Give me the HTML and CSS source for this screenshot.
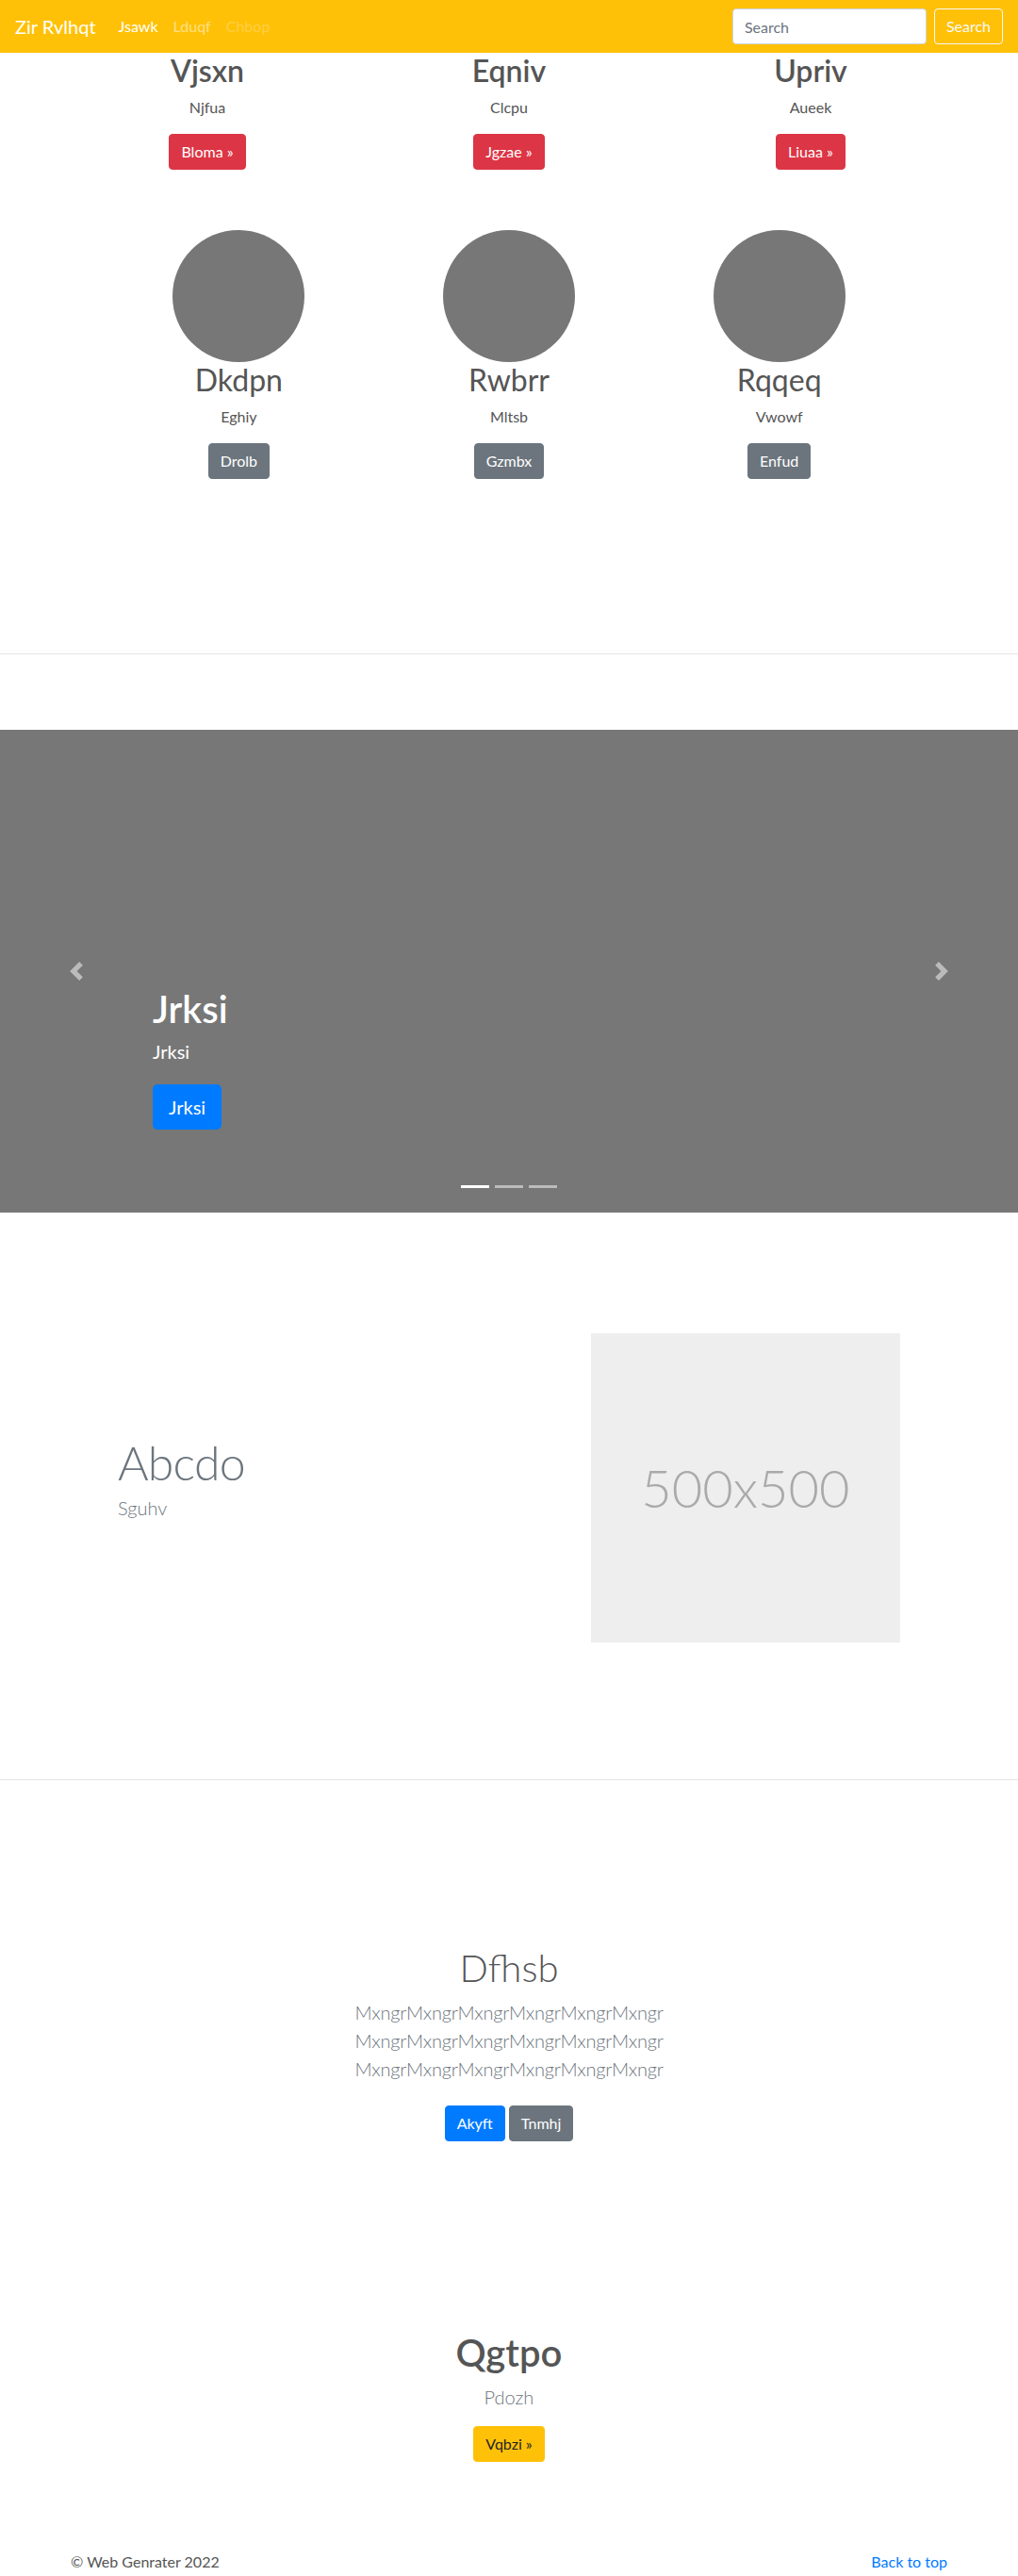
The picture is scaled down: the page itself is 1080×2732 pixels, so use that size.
FILE: index.html
```html
<!DOCTYPE html>
<html lang="en">
<head>
<meta charset="utf-8">
<title>Zir Rvlhqt</title>
<link rel="stylesheet" href="styles.css">
</head>
<body>
<nav class="navbar">
  <a class="brand" href="#">Zir Rvlhqt</a>
  <ul class="nav">
    <li><a class="nav-link active" href="#">Jsawk</a></li>
    <li><a class="nav-link" href="#">Lduqf</a></li>
    <li><a class="nav-link disabled" href="#">Chbop</a></li>
  </ul>
  <form class="search">
    <input class="search-input" type="text" placeholder="Search">
    <button class="btn btn-outline-light" type="button">Search</button>
  </form>
</nav>

<section class="features">
  <div class="feature">
    <h2 class="feature-title">Vjsxn</h2>
    <p class="feature-text">Njfua</p>
    <p class="feature-action"><a class="btn btn-danger" href="#">Bloma &raquo;</a></p>
  </div>
  <div class="feature">
    <h2 class="feature-title">Eqniv</h2>
    <p class="feature-text">Clcpu</p>
    <p class="feature-action"><a class="btn btn-danger" href="#">Jgzae &raquo;</a></p>
  </div>
  <div class="feature">
    <h2 class="feature-title">Upriv</h2>
    <p class="feature-text">Aueek</p>
    <p class="feature-action"><a class="btn btn-danger" href="#">Liuaa &raquo;</a></p>
  </div>
</section>

<section class="team">
  <div class="member">
    <div class="avatar"></div>
    <h2 class="member-name">Dkdpn</h2>
    <p class="feature-text">Eghiy</p>
    <p class="feature-action"><a class="btn btn-secondary" href="#">Drolb</a></p>
  </div>
  <div class="member">
    <div class="avatar"></div>
    <h2 class="member-name">Rwbrr</h2>
    <p class="feature-text">Mltsb</p>
    <p class="feature-action"><a class="btn btn-secondary" href="#">Gzmbx</a></p>
  </div>
  <div class="member">
    <div class="avatar"></div>
    <h2 class="member-name">Rqqeq</h2>
    <p class="feature-text">Vwowf</p>
    <p class="feature-action"><a class="btn btn-secondary" href="#">Enfud</a></p>
  </div>
</section>

<hr class="divider divider-top">

<section class="carousel">
  <div class="caption">
    <h1 class="caption-title">Jrksi</h1>
    <p class="caption-text">Jrksi</p>
    <a class="btn btn-lg btn-primary caption-btn" href="#">Jrksi</a>
  </div>
  <a class="ctrl ctrl-prev" href="#" aria-label="Previous">
    <svg class="ctrl-icon" viewBox="0 0 8 8" width="20" height="20"><path d="M5.25 0l-4 4 4 4 1.5-1.5L4.25 4l2.5-2.5L5.25 0z"/></svg>
  </a>
  <a class="ctrl ctrl-next" href="#" aria-label="Next">
    <svg class="ctrl-icon" viewBox="0 0 8 8" width="20" height="20"><path d="M2.75 0l-1.5 1.5L3.75 4l-2.5 2.5L2.75 8l4-4-4-4z"/></svg>
  </a>
  <ol class="indicators">
    <li class="indicator active"></li>
    <li class="indicator"></li>
    <li class="indicator"></li>
  </ol>
</section>

<section class="featurette">
  <div class="featurette-text">
    <h2 class="featurette-heading">Abcdo</h2>
    <p class="lead muted">Sguhv</p>
  </div>
  <div class="featurette-media">
    <div class="placeholder">500x500</div>
  </div>
</section>

<hr class="divider divider-mid">

<section class="jumbotron">
  <div class="jumbotron-inner">
    <h1 class="jumbotron-heading">Dfhsb</h1>
    <p class="lead muted jumbotron-lead">MxngrMxngrMxngrMxngrMxngrMxngr MxngrMxngrMxngrMxngrMxngrMxngr MxngrMxngrMxngrMxngrMxngrMxngr</p>
    <p class="actions">
      <a class="btn btn-primary" href="#">Akyft</a>
      <a class="btn btn-secondary" href="#">Tnmhj</a>
    </p>
  </div>
</section>

<section class="cta">
  <h1 class="cta-heading">Qgtpo</h1>
  <p class="lead muted cta-lead">Pdozh</p>
  <p><a class="btn btn-warning" href="#">Vqbzi &raquo;</a></p>
</section>

<footer class="footer">
  <p>&copy; Web Genrater 2022</p>
  <p><a class="back-top" href="#">Back to top</a></p>
</footer>
</body>
</html>
```

FILE: styles.css
```css
* {
  box-sizing: border-box;
}

body {
  margin: 0;
  font-family: Lato, "Open Sans", sans-serif;
  font-size: 16px;
  line-height: 1.5;
  color: #555;
  background: #fff;
}

a {
  text-decoration: none;
}

p,
h1,
h2 {
  margin: 0;
}

/* Buttons */
.btn {
  display: inline-block;
  padding: 6px 12px;
  font-size: 16px;
  line-height: 24px;
  font-family: inherit;
  font-weight: 400;
  border: 1px solid transparent;
  border-radius: 4px;
  text-align: center;
  white-space: nowrap;
}

.btn-lg {
  padding: 8px 16px;
  font-size: 20px;
  line-height: 30px;
  border-radius: 5px;
}

.btn-danger {
  background: #dc3545;
  border-color: #dc3545;
  color: #fff;
}

.btn-secondary {
  background: #6c757d;
  border-color: #6c757d;
  color: #fff;
}

.btn-primary {
  background: #007bff;
  border-color: #007bff;
  color: #fff;
}

.btn-warning {
  background: #ffc107;
  border-color: #ffc107;
  color: #212529;
}

.btn-outline-light {
  background: transparent;
  border-color: #f8f9fa;
  color: #f8f9fa;
}

/* Navbar */
.navbar {
  height: 56px;
  background: #ffc107;
  display: flex;
  align-items: center;
  padding: 0 16px;
}

.brand {
  color: #fff;
  font-size: 20px;
  line-height: 30px;
  margin-right: 16px;
}

.nav {
  display: flex;
  list-style: none;
  margin: 0;
  padding: 0;
}

.nav-link {
  display: block;
  padding: 8px;
  color: rgba(255, 255, 255, 0.5);
}

.nav-link.active {
  color: #fff;
}

.nav-link.disabled {
  color: rgba(255, 255, 255, 0.25);
}

.search {
  margin: 0 0 0 auto;
  display: flex;
  align-items: center;
}

.search-input {
  width: 206px;
  height: 38px;
  padding: 6px 12px;
  font-family: inherit;
  font-size: 16px;
  color: #495057;
  background: #fff;
  border: 1px solid #ced4da;
  border-radius: 4px;
  margin-right: 8px;
}

.search-input::placeholder {
  color: #6c757d;
}

/* First row */
.features {
  width: 960px;
  margin: 0 auto;
  display: grid;
  grid-template-columns: repeat(3, 1fr);
  text-align: center;
}

.feature,
.member {
  padding: 0 15px;
}

.feature-title {
  font-size: 32px;
  line-height: 38px;
  font-weight: 600;
  margin-bottom: 8px;
}

.feature-text {
  margin-bottom: 16px;
}

.feature-action {
  margin-bottom: 16px;
}

/* Team row */
.team {
  width: 860px;
  margin: 48px auto 0;
  display: grid;
  grid-template-columns: repeat(3, 1fr);
  text-align: center;
}

.avatar {
  width: 140px;
  height: 140px;
  border-radius: 50%;
  background: #777;
  margin: 0 auto;
}

.member-name {
  font-size: 32px;
  line-height: 38px;
  font-weight: 400;
  margin-bottom: 8px;
}

/* Dividers */
.divider {
  border: 0;
  border-top: 1px solid #e5e5e5;
  height: 0;
}

.divider-top {
  margin: 169px 0 80px;
}

.divider-mid {
  margin: 145px 0 0;
}

/* Carousel */
.carousel {
  position: relative;
  height: 512px;
  background: #777;
  margin-bottom: 128px;
}

.caption {
  position: absolute;
  left: 15%;
  right: 15%;
  bottom: 48px;
  padding: 20px 0;
  color: #fff;
  display: flex;
  flex-direction: column;
  align-items: flex-start;
}

.caption-title {
  font-size: 40px;
  line-height: 48px;
  font-weight: 600;
  margin-bottom: 6px;
}

.caption-text {
  font-size: 20px;
  line-height: 30px;
  margin-bottom: 20px;
}

.caption-btn {
  margin-bottom: 20px;
}

.ctrl {
  position: absolute;
  top: 0;
  bottom: 0;
  width: 15%;
  display: flex;
  align-items: center;
  justify-content: center;
  opacity: 0.5;
}

.ctrl-prev {
  left: 0;
}

.ctrl-next {
  right: 0;
}

.ctrl-icon {
  fill: #fff;
  display: block;
}

.indicators {
  position: absolute;
  left: 0;
  right: 0;
  bottom: 26px;
  margin: 0;
  padding: 0;
  list-style: none;
  display: flex;
  justify-content: center;
  gap: 6px;
}

.indicator {
  width: 30px;
  height: 3px;
  background: #fff;
  opacity: 0.5;
}

.indicator.active {
  opacity: 1;
}

/* Featurette */
.featurette {
  width: 860px;
  margin: 0 auto;
  display: grid;
  grid-template-columns: 7fr 5fr;
  align-items: center;
}

.featurette-text,
.featurette-media {
  padding: 0 15px;
}

.featurette-heading {
  font-size: 50px;
  line-height: 50px;
  font-weight: 300;
  letter-spacing: -0.8px;
  color: #6c757d;
  margin-bottom: 8px;
}

.lead {
  font-size: 20px;
  line-height: 30px;
  font-weight: 300;
  margin-bottom: 16px;
}

.muted {
  color: #6c757d;
}

.placeholder {
  height: 328px;
  background: #eee;
  display: flex;
  align-items: center;
  justify-content: center;
  color: #aaa;
  font-size: 56px;
  font-weight: 300;
}

/* Jumbotron */
.jumbotron {
  padding-top: 175px;
  text-align: center;
}

.jumbotron-inner {
  max-width: 640px;
  margin: 0 auto;
  padding: 0 15px;
}

.jumbotron-heading {
  font-size: 40px;
  line-height: 48px;
  font-weight: 300;
  margin-bottom: 8px;
}

.jumbotron-lead {
  letter-spacing: -0.2px;
}

.actions {
  display: flex;
  justify-content: center;
  gap: 4px;
  padding: 8px 0;
}

/* CTA */
.cta {
  padding-top: 192px;
  text-align: center;
}

.cta-heading {
  font-size: 40px;
  line-height: 48px;
  font-weight: 600;
  margin-bottom: 8px;
}

.cta p:last-child {
  margin-bottom: 16px;
}

/* Footer */
.footer {
  width: 960px;
  margin: 0 auto;
  padding: 78px 15px 0;
  display: flex;
  justify-content: space-between;
}

.back-top {
  color: #007bff;
}
```
